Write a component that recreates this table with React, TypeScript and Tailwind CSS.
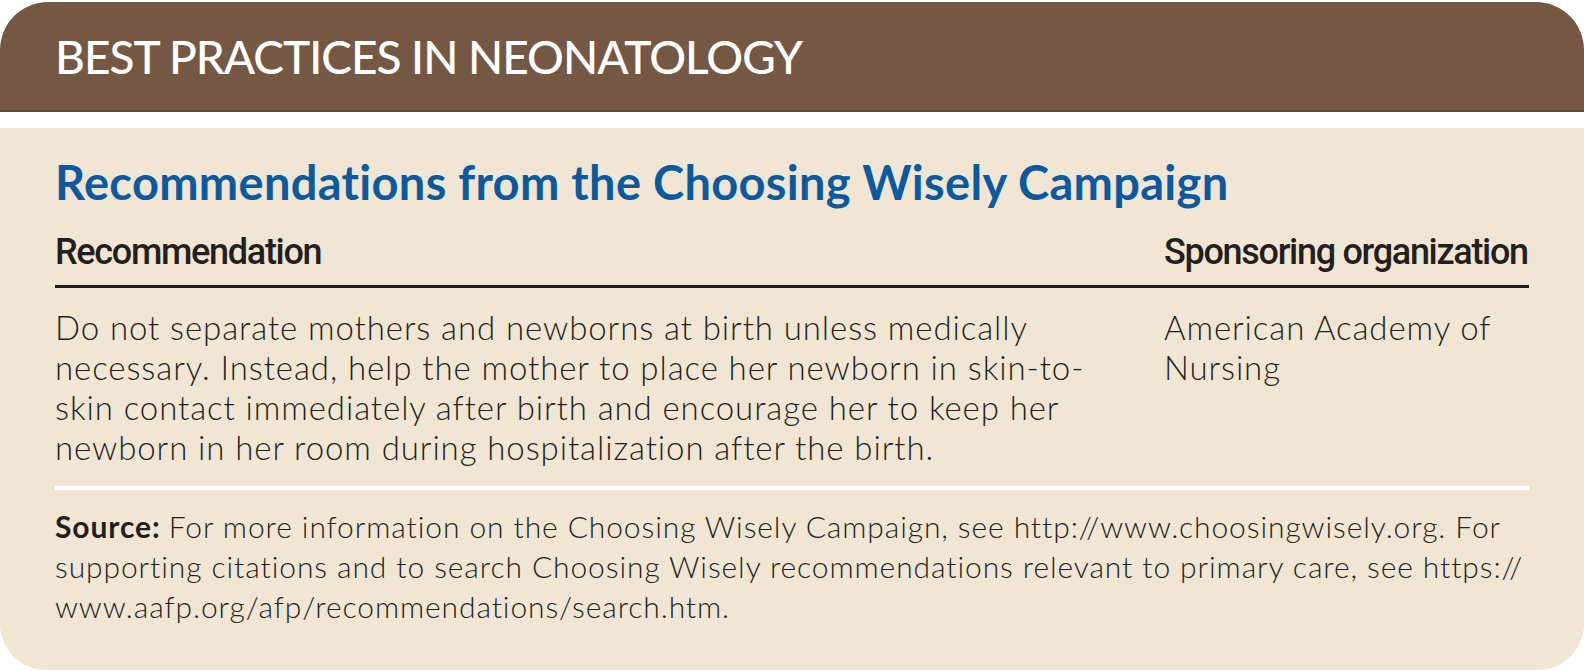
import React from "react";

const sans = "font-['Lato','Open_Sans',sans-serif]";
const cond = "font-['Roboto','Liberation_Sans',sans-serif]";

/**
 * Best practices box
 */
export default function App() {
  return (
    <div className="w-[1584px] h-[671px] bg-white pt-[2px]">
      <div className="h-[110px] bg-[#745844] rounded-t-[48px] flex items-center pl-[55px] border-b-2 border-[#5e4535]">
        <h1 className={`${sans} text-white text-[46px] font-medium tracking-[-1px]`}>BEST PRACTICES IN NEONATOLOGY</h1>
      </div>
      <div className="h-[16px]" />
      <div className="h-[542px] bg-[#f1e6d3] rounded-b-[46px] px-[55px] pt-[26px] text-[#231f20]">
        <h2 className={`${sans} text-[#0b5aa0] text-[47px] font-bold leading-[56px] tracking-[0.3px]`}>
          Recommendations from the Choosing Wisely Campaign
        </h2>
        <div className="flex border-b-[3px] border-[#231f20] pt-[22px] pb-[13px]">
          <div className={`${cond} w-[1109px] text-[36px] font-medium leading-[40px] tracking-[-1.3px]`}>
            Recommendation
          </div>
          <div className={`${cond} flex-1 text-[36px] font-medium leading-[40px] tracking-[-1.3px]`}>
            Sponsoring organization
          </div>
        </div>
        <div
          className={`${sans} flex border-b-4 border-white pt-[19px] pb-[19px] font-light text-[33px] leading-[40px] tracking-[0.9px]`}
        >
          <p className="w-[1109px] pr-[30px]">
            Do not separate mothers and newborns at birth unless medically necessary. Instead, help the mother to place
            her newborn in skin-to-skin contact immediately after birth and encourage her to keep her newborn in her
            room during hospitalization after the birth.
          </p>
          <p className="flex-1">American Academy of Nursing</p>
        </div>
        <p className={`${sans} mr-[-25px] pt-[16px] text-[30px] font-light leading-[40px] tracking-[0.9px]`}>
          <b className="font-bold">Source: </b>For more information on the Choosing Wisely Campaign, see
          http://www.choosingwisely.org. For supporting citations and to search Choosing Wisely recommendations
          relevant to primary care, see https://
          <wbr />
          www.aafp.org/afp/recommendations/search.htm.
        </p>
      </div>
    </div>
  );
}
